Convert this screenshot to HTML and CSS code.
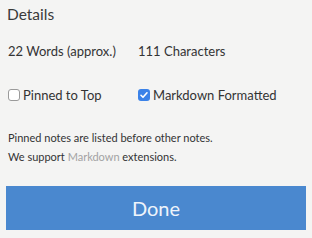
FILE: index.html
```html
<!DOCTYPE html>
<html lang="en">
<head>
  <meta charset="UTF-8">
  <title>Details</title>
  <link rel="stylesheet" href="styles.css">
</head>
<body>
  <div class="panel">
    <h3>Details</h3>

    <div class="row stats">
      <span>22 Words (approx.)</span>
      <span>111 Characters</span>
    </div>

    <div class="row options">
      <label class="check">
        <span class="box"></span>
        Pinned to Top
      </label>
      <label class="check">
        <span class="box checked">
          <svg viewBox="0 0 12 12" width="12" height="12"><path d="M3 6.3 L5 8.3 L9 3.8" fill="none" stroke="#fff" stroke-width="1.6" stroke-linecap="round" stroke-linejoin="round"/></svg>
        </span>
        Markdown Formatted
      </label>
    </div>

    <div class="notes">
      <p>Pinned notes are listed before other notes.</p>
      <p>We support <a href="#">Markdown</a> extensions.</p>
    </div>

    <button class="done">Done</button>
  </div>
</body>
</html>
```

FILE: styles.css
```css
body {
  margin: 0;
  background-color: #f4f4f3;
  font-family: Lato, "Open Sans", sans-serif;
  color: #333;
}

.panel {
  padding: 4px 6px 8px 6px;
}

h3 {
  margin: 0 0 0 1px;
  font-size: 15.5px;
  font-weight: normal;
  line-height: 21px;
  color: #3a3a3a;
}

.row {
  display: grid;
  grid-template-columns: 130px 1fr;
  padding-left: 2px;
}

.stats {
  margin-top: 17px;
  font-size: 13px;
  line-height: 18px;
}

.options {
  margin-top: 26px;
  font-size: 13px;
  line-height: 18px;
}

.check {
  display: flex;
  align-items: center;
  gap: 3px;
}

.box {
  width: 10px;
  height: 10px;
  border: 1px solid #9a9a9a;
  border-radius: 3px;
  background: #fff;
  display: flex;
  align-items: center;
  justify-content: center;
}

.box.checked {
  width: 12px;
  height: 12px;
  border: none;
  background: #3b82e8;
}

.notes {
  margin-top: 24px;
  padding-left: 2px;
  font-size: 11px;
  line-height: 19px;
}

.notes p {
  margin: 0;
}

.notes a {
  color: #a3a3a3;
  text-decoration: none;
}

.done {
  display: block;
  width: 100%;
  height: 44px;
  margin-top: 20px;
  border: none;
  border-radius: 0;
  background-color: #4a88cf;
  color: #eef4fb;
  font-family: Lato, "Open Sans", sans-serif;
  font-size: 20px;
}
```
